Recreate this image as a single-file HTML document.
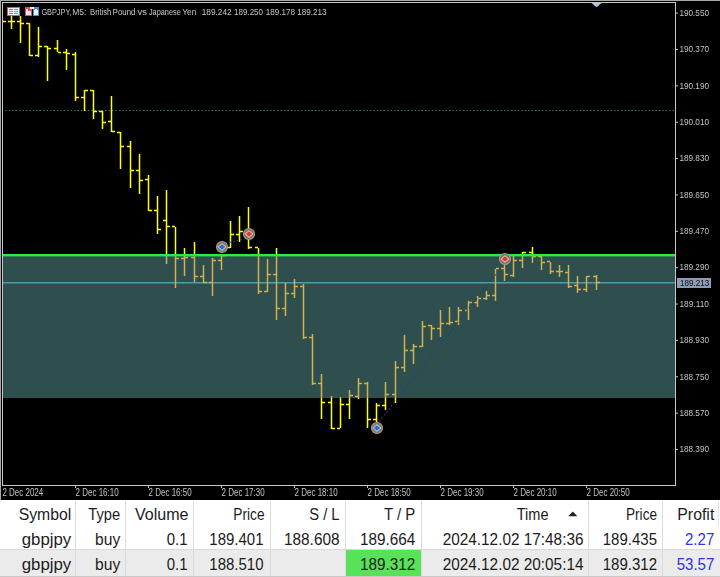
<!DOCTYPE html>
<html><head><meta charset="utf-8"><style>
html,body{margin:0;padding:0;background:#fff;width:720px;height:577px;overflow:hidden}
svg{position:absolute;left:0;top:0;display:block}
.ch{will-change:transform}
text{font-family:"Liberation Sans",sans-serif;white-space:pre}
.ax{font-size:8.4px;fill:#c4c4c4}
.tx{font-size:10px;fill:#c4c4c4}
.tt{font-size:8.4px;fill:#c8c8c8}
.tb{font-size:15.6px}
</style></head><body>
<svg width="720" height="577" viewBox="0 0 720 577" shape-rendering="crispEdges">
<rect x="0" y="500" width="720" height="77" fill="#ffffff"/><rect x="0" y="550" width="720" height="26" fill="#ebebeb"/><rect x="345" y="550" width="76" height="26" fill="#58e258"/><rect x="0" y="549" width="720" height="1" fill="#d9d9d9"/><rect x="0" y="576" width="720" height="1" fill="#c8c8c8"/><rect x="75" y="501" width="1" height="75" fill="#dcdcdc"/><rect x="125" y="501" width="1" height="75" fill="#dcdcdc"/><rect x="193" y="501" width="1" height="75" fill="#dcdcdc"/><rect x="270" y="501" width="1" height="75" fill="#dcdcdc"/><rect x="345" y="501" width="1" height="75" fill="#dcdcdc"/><rect x="421" y="501" width="1" height="75" fill="#dcdcdc"/><rect x="588" y="501" width="1" height="75" fill="#dcdcdc"/><rect x="662" y="501" width="1" height="75" fill="#dcdcdc"/><rect x="718" y="501" width="1" height="25" fill="#e4e4e4"/><text x="18.70" y="520" textLength="52.60" lengthAdjust="spacingAndGlyphs" class="tb" style="fill:#1c1c1c">Symbol</text><text x="88.30" y="520" textLength="31.90" lengthAdjust="spacingAndGlyphs" class="tb" style="fill:#1c1c1c">Type</text><text x="135.00" y="520" textLength="53.50" lengthAdjust="spacingAndGlyphs" class="tb" style="fill:#1c1c1c">Volume</text><text x="233.30" y="520" textLength="31.20" lengthAdjust="spacingAndGlyphs" class="tb" style="fill:#1c1c1c">Price</text><text x="309.30" y="520" textLength="30.20" lengthAdjust="spacingAndGlyphs" class="tb" style="fill:#1c1c1c">S / L</text><text x="384.00" y="520" textLength="31.30" lengthAdjust="spacingAndGlyphs" class="tb" style="fill:#1c1c1c">T / P</text><text x="516.70" y="520" textLength="31.80" lengthAdjust="spacingAndGlyphs" class="tb" style="fill:#1c1c1c">Time</text><text x="626.00" y="520" textLength="31.00" lengthAdjust="spacingAndGlyphs" class="tb" style="fill:#1c1c1c">Price</text><text x="677.30" y="520" textLength="37.00" lengthAdjust="spacingAndGlyphs" class="tb" style="fill:#1c1c1c">Profit</text><text x="21.70" y="544.5" textLength="49.60" lengthAdjust="spacingAndGlyphs" class="tb" style="fill:#1c1c1c">gbpjpy</text><text x="95.00" y="544.5" textLength="25.20" lengthAdjust="spacingAndGlyphs" class="tb" style="fill:#1c1c1c">buy</text><text x="166.70" y="544.5" textLength="20.80" lengthAdjust="spacingAndGlyphs" class="tb" style="fill:#1c1c1c">0.1</text><text x="209.30" y="544.5" textLength="54.20" lengthAdjust="spacingAndGlyphs" class="tb" style="fill:#1c1c1c">189.401</text><text x="284.00" y="544.5" textLength="55.50" lengthAdjust="spacingAndGlyphs" class="tb" style="fill:#1c1c1c">188.608</text><text x="360.00" y="544.5" textLength="55.30" lengthAdjust="spacingAndGlyphs" class="tb" style="fill:#1c1c1c">189.664</text><text x="442.70" y="544.5" textLength="140.80" lengthAdjust="spacingAndGlyphs" class="tb" style="fill:#1c1c1c">2024.12.02 17:48:36</text><text x="602.70" y="544.5" textLength="54.30" lengthAdjust="spacingAndGlyphs" class="tb" style="fill:#1c1c1c">189.435</text><text x="685.00" y="544.5" textLength="29.30" lengthAdjust="spacingAndGlyphs" class="tb" style="fill:#3232e6">2.27</text><text x="21.70" y="569.5" textLength="49.60" lengthAdjust="spacingAndGlyphs" class="tb" style="fill:#1c1c1c">gbpjpy</text><text x="95.00" y="569.5" textLength="25.20" lengthAdjust="spacingAndGlyphs" class="tb" style="fill:#1c1c1c">buy</text><text x="166.70" y="569.5" textLength="20.80" lengthAdjust="spacingAndGlyphs" class="tb" style="fill:#1c1c1c">0.1</text><text x="209.30" y="569.5" textLength="54.20" lengthAdjust="spacingAndGlyphs" class="tb" style="fill:#1c1c1c">188.510</text><text x="360.00" y="569.5" textLength="55.30" lengthAdjust="spacingAndGlyphs" class="tb" style="fill:#1c1c1c">189.312</text><text x="442.70" y="569.5" textLength="140.80" lengthAdjust="spacingAndGlyphs" class="tb" style="fill:#1c1c1c">2024.12.02 20:05:14</text><text x="602.70" y="569.5" textLength="54.30" lengthAdjust="spacingAndGlyphs" class="tb" style="fill:#1c1c1c">189.312</text><text x="676.70" y="569.5" textLength="37.60" lengthAdjust="spacingAndGlyphs" class="tb" style="fill:#3232e6">53.57</text><path d="M568.2 516.2 L577.4 516.2 L572.8 511.6 Z" fill="#202020" shape-rendering="auto"/>
</svg>
<svg class="ch" width="720" height="500" viewBox="0 0 720 500" shape-rendering="crispEdges">
<rect x="0" y="0" width="720" height="500" fill="#000"/>
<rect x="0" y="0" width="720" height="1" fill="#a8a8a8"/>
<rect x="0" y="0" width="1" height="500" fill="#a8a8a8"/>
<rect x="3" y="256" width="672" height="142" fill="#2f4f4f"/>
<g shape-rendering="auto"><line x1="3" y1="110.5" x2="675" y2="110.5" stroke="#2e8b57" stroke-width="1" stroke-dasharray="1.4 2.04" stroke-dashoffset="1.12"/></g>
<rect x="3" y="282" width="672" height="1.5" fill="#4a9eae" shape-rendering="auto"/>
<g shape-rendering="auto"><rect x="3" y="20.75" width="3" height="1.5" fill="#ffff00"/><rect x="10.75" y="16" width="1.5" height="13" fill="#ffff00"/><rect x="8" y="20.75" width="3" height="1.5" fill="#ffff00"/><rect x="12" y="20.75" width="3" height="1.5" fill="#ffff00"/><rect x="19.75" y="16" width="1.5" height="27" fill="#ffff00"/><rect x="17" y="20.75" width="3" height="1.5" fill="#ffff00"/><rect x="21" y="22.75" width="3" height="1.5" fill="#ffff00"/><rect x="28.75" y="23" width="1.5" height="33" fill="#ffff00"/><rect x="26" y="22.75" width="3" height="1.5" fill="#ffff00"/><rect x="30" y="54.75" width="3" height="1.5" fill="#ffff00"/><rect x="37.75" y="27" width="1.5" height="30" fill="#ffff00"/><rect x="35" y="54.75" width="3" height="1.5" fill="#ffff00"/><rect x="39" y="45.75" width="3" height="1.5" fill="#ffff00"/><rect x="46.75" y="46" width="1.5" height="35" fill="#ffff00"/><rect x="44" y="45.75" width="3" height="1.5" fill="#ffff00"/><rect x="48" y="47.75" width="3" height="1.5" fill="#ffff00"/><rect x="56.75" y="40" width="1.5" height="12" fill="#ffff00"/><rect x="54" y="47.75" width="3" height="1.5" fill="#ffff00"/><rect x="58" y="51.75" width="3" height="1.5" fill="#ffff00"/><rect x="65.75" y="49" width="1.5" height="21" fill="#ffff00"/><rect x="63" y="51.75" width="3" height="1.5" fill="#ffff00"/><rect x="67" y="52.75" width="3" height="1.5" fill="#ffff00"/><rect x="74.75" y="52" width="1.5" height="49" fill="#ffff00"/><rect x="72" y="53.75" width="3" height="1.5" fill="#ffff00"/><rect x="76" y="96.75" width="3" height="1.5" fill="#ffff00"/><rect x="83.75" y="90" width="1.5" height="21" fill="#ffff00"/><rect x="81" y="96.75" width="3" height="1.5" fill="#ffff00"/><rect x="85" y="89.75" width="3" height="1.5" fill="#ffff00"/><rect x="92.75" y="90" width="1.5" height="29" fill="#ffff00"/><rect x="90" y="89.75" width="3" height="1.5" fill="#ffff00"/><rect x="94" y="110.75" width="3" height="1.5" fill="#ffff00"/><rect x="101.75" y="111" width="1.5" height="18" fill="#ffff00"/><rect x="99" y="110.75" width="3" height="1.5" fill="#ffff00"/><rect x="103" y="121.75" width="3" height="1.5" fill="#ffff00"/><rect x="110.75" y="96" width="1.5" height="36" fill="#ffff00"/><rect x="108" y="120.75" width="3" height="1.5" fill="#ffff00"/><rect x="112" y="130.75" width="3" height="1.5" fill="#ffff00"/><rect x="119.75" y="132" width="1.5" height="37" fill="#ffff00"/><rect x="117" y="131.75" width="3" height="1.5" fill="#ffff00"/><rect x="121" y="145.75" width="3" height="1.5" fill="#ffff00"/><rect x="129.75" y="141" width="1.5" height="47" fill="#ffff00"/><rect x="127" y="145.75" width="3" height="1.5" fill="#ffff00"/><rect x="131" y="169.75" width="3" height="1.5" fill="#ffff00"/><rect x="138.75" y="154" width="1.5" height="40" fill="#ffff00"/><rect x="136" y="169.75" width="3" height="1.5" fill="#ffff00"/><rect x="140" y="179.75" width="3" height="1.5" fill="#ffff00"/><rect x="147.75" y="175" width="1.5" height="36" fill="#ffff00"/><rect x="145" y="178.75" width="3" height="1.5" fill="#ffff00"/><rect x="149" y="209.75" width="3" height="1.5" fill="#ffff00"/><rect x="156.75" y="196" width="1.5" height="38" fill="#ffff00"/><rect x="154" y="209.75" width="3" height="1.5" fill="#ffff00"/><rect x="158" y="228.75" width="3" height="1.5" fill="#ffff00"/><rect x="165.75" y="190" width="1.5" height="66" fill="#ffff00"/><rect x="165.75" y="256" width="1.5" height="8" fill="#d0b04f"/><rect x="163" y="219.75" width="3" height="1.5" fill="#ffff00"/><rect x="167" y="225.75" width="3" height="1.5" fill="#ffff00"/><rect x="174.75" y="227" width="1.5" height="29" fill="#ffff00"/><rect x="174.75" y="256" width="1.5" height="32" fill="#d0b04f"/><rect x="172" y="225.75" width="3" height="1.5" fill="#ffff00"/><rect x="176" y="257.75" width="3" height="1.5" fill="#d0b04f"/><rect x="183.75" y="248" width="1.5" height="8" fill="#ffff00"/><rect x="183.75" y="256" width="1.5" height="20" fill="#d0b04f"/><rect x="181" y="257.75" width="3" height="1.5" fill="#d0b04f"/><rect x="185" y="256.75" width="3" height="1.5" fill="#d0b04f"/><rect x="193.75" y="242" width="1.5" height="14" fill="#ffff00"/><rect x="193.75" y="256" width="1.5" height="26" fill="#d0b04f"/><rect x="191" y="256.75" width="3" height="1.5" fill="#d0b04f"/><rect x="195" y="275.75" width="3" height="1.5" fill="#d0b04f"/><rect x="202.75" y="265" width="1.5" height="18" fill="#d0b04f"/><rect x="200" y="275.75" width="3" height="1.5" fill="#d0b04f"/><rect x="204" y="281.75" width="3" height="1.5" fill="#d0b04f"/><rect x="211.75" y="258" width="1.5" height="38" fill="#d0b04f"/><rect x="209" y="281.75" width="3" height="1.5" fill="#d0b04f"/><rect x="213" y="259.75" width="3" height="1.5" fill="#d0b04f"/><rect x="220.75" y="255" width="1.5" height="1" fill="#ffff00"/><rect x="220.75" y="256" width="1.5" height="14" fill="#d0b04f"/><rect x="218" y="259.75" width="3" height="1.5" fill="#d0b04f"/><rect x="222" y="254.75" width="3" height="1.5" fill="#ffff00"/><rect x="229.75" y="221" width="1.5" height="27" fill="#ffff00"/><rect x="227" y="246.75" width="3" height="1.5" fill="#ffff00"/><rect x="231" y="233.75" width="3" height="1.5" fill="#ffff00"/><rect x="238.75" y="216" width="1.5" height="26" fill="#ffff00"/><rect x="236" y="233.75" width="3" height="1.5" fill="#ffff00"/><rect x="240" y="230.75" width="3" height="1.5" fill="#ffff00"/><rect x="247.75" y="207" width="1.5" height="42" fill="#ffff00"/><rect x="245" y="233.75" width="3" height="1.5" fill="#ffff00"/><rect x="249" y="246.75" width="3" height="1.5" fill="#ffff00"/><rect x="257.75" y="248" width="1.5" height="8" fill="#ffff00"/><rect x="257.75" y="256" width="1.5" height="38" fill="#d0b04f"/><rect x="255" y="246.75" width="3" height="1.5" fill="#ffff00"/><rect x="259" y="290.75" width="3" height="1.5" fill="#d0b04f"/><rect x="266.75" y="259" width="1.5" height="33" fill="#d0b04f"/><rect x="264" y="290.75" width="3" height="1.5" fill="#d0b04f"/><rect x="268" y="273.75" width="3" height="1.5" fill="#d0b04f"/><rect x="275.75" y="248" width="1.5" height="8" fill="#ffff00"/><rect x="275.75" y="256" width="1.5" height="64" fill="#d0b04f"/><rect x="273" y="273.75" width="3" height="1.5" fill="#d0b04f"/><rect x="277" y="307.75" width="3" height="1.5" fill="#d0b04f"/><rect x="284.75" y="283" width="1.5" height="33" fill="#d0b04f"/><rect x="282" y="307.75" width="3" height="1.5" fill="#d0b04f"/><rect x="286" y="292.75" width="3" height="1.5" fill="#d0b04f"/><rect x="293.75" y="279" width="1.5" height="19" fill="#d0b04f"/><rect x="291" y="292.75" width="3" height="1.5" fill="#d0b04f"/><rect x="295" y="285.75" width="3" height="1.5" fill="#d0b04f"/><rect x="302.75" y="284" width="1.5" height="55" fill="#d0b04f"/><rect x="300" y="285.75" width="3" height="1.5" fill="#d0b04f"/><rect x="304" y="336.75" width="3" height="1.5" fill="#d0b04f"/><rect x="311.75" y="334" width="1.5" height="51" fill="#d0b04f"/><rect x="309" y="336.75" width="3" height="1.5" fill="#d0b04f"/><rect x="313" y="382.75" width="3" height="1.5" fill="#d0b04f"/><rect x="320.75" y="374" width="1.5" height="24" fill="#d0b04f"/><rect x="320.75" y="398" width="1.5" height="21" fill="#ffff00"/><rect x="318" y="382.75" width="3" height="1.5" fill="#d0b04f"/><rect x="322" y="401.75" width="3" height="1.5" fill="#ffff00"/><rect x="330.75" y="396" width="1.5" height="2" fill="#d0b04f"/><rect x="330.75" y="398" width="1.5" height="31" fill="#ffff00"/><rect x="328" y="401.75" width="3" height="1.5" fill="#ffff00"/><rect x="332" y="427.75" width="3" height="1.5" fill="#ffff00"/><rect x="339.75" y="397" width="1.5" height="1" fill="#d0b04f"/><rect x="339.75" y="398" width="1.5" height="30" fill="#ffff00"/><rect x="337" y="427.75" width="3" height="1.5" fill="#ffff00"/><rect x="341" y="403.75" width="3" height="1.5" fill="#ffff00"/><rect x="348.75" y="390" width="1.5" height="8" fill="#d0b04f"/><rect x="348.75" y="398" width="1.5" height="21" fill="#ffff00"/><rect x="346" y="403.75" width="3" height="1.5" fill="#ffff00"/><rect x="350" y="394.75" width="3" height="1.5" fill="#d0b04f"/><rect x="357.75" y="378" width="1.5" height="20" fill="#d0b04f"/><rect x="357.75" y="398" width="1.5" height="1" fill="#ffff00"/><rect x="355" y="395.75" width="3" height="1.5" fill="#d0b04f"/><rect x="359" y="382.75" width="3" height="1.5" fill="#d0b04f"/><rect x="366.75" y="382" width="1.5" height="16" fill="#d0b04f"/><rect x="366.75" y="398" width="1.5" height="30" fill="#ffff00"/><rect x="364" y="382.75" width="3" height="1.5" fill="#d0b04f"/><rect x="368" y="418.75" width="3" height="1.5" fill="#ffff00"/><rect x="375.75" y="403" width="1.5" height="19" fill="#ffff00"/><rect x="373" y="418.75" width="3" height="1.5" fill="#ffff00"/><rect x="377" y="404.75" width="3" height="1.5" fill="#ffff00"/><rect x="384.75" y="382" width="1.5" height="16" fill="#d0b04f"/><rect x="384.75" y="398" width="1.5" height="12" fill="#ffff00"/><rect x="382" y="404.75" width="3" height="1.5" fill="#ffff00"/><rect x="386" y="393.75" width="3" height="1.5" fill="#d0b04f"/><rect x="394.75" y="361" width="1.5" height="37" fill="#d0b04f"/><rect x="394.75" y="398" width="1.5" height="5" fill="#ffff00"/><rect x="392" y="393.75" width="3" height="1.5" fill="#d0b04f"/><rect x="396" y="366.75" width="3" height="1.5" fill="#d0b04f"/><rect x="403.75" y="335" width="1.5" height="37" fill="#d0b04f"/><rect x="401" y="366.75" width="3" height="1.5" fill="#d0b04f"/><rect x="405" y="349.75" width="3" height="1.5" fill="#d0b04f"/><rect x="412.75" y="344" width="1.5" height="20" fill="#d0b04f"/><rect x="410" y="349.75" width="3" height="1.5" fill="#d0b04f"/><rect x="414" y="345.75" width="3" height="1.5" fill="#d0b04f"/><rect x="421.75" y="321" width="1.5" height="26" fill="#d0b04f"/><rect x="419" y="345.75" width="3" height="1.5" fill="#d0b04f"/><rect x="423" y="325.75" width="3" height="1.5" fill="#d0b04f"/><rect x="430.75" y="325" width="1.5" height="15" fill="#d0b04f"/><rect x="428" y="324.75" width="3" height="1.5" fill="#d0b04f"/><rect x="432" y="327.75" width="3" height="1.5" fill="#d0b04f"/><rect x="439.75" y="310" width="1.5" height="27" fill="#d0b04f"/><rect x="437" y="327.75" width="3" height="1.5" fill="#d0b04f"/><rect x="441" y="322.75" width="3" height="1.5" fill="#d0b04f"/><rect x="448.75" y="307" width="1.5" height="18" fill="#d0b04f"/><rect x="446" y="322.75" width="3" height="1.5" fill="#d0b04f"/><rect x="450" y="321.75" width="3" height="1.5" fill="#d0b04f"/><rect x="457.75" y="307" width="1.5" height="18" fill="#d0b04f"/><rect x="455" y="320.75" width="3" height="1.5" fill="#d0b04f"/><rect x="459" y="309.75" width="3" height="1.5" fill="#d0b04f"/><rect x="467.75" y="301" width="1.5" height="19" fill="#d0b04f"/><rect x="465" y="309.75" width="3" height="1.5" fill="#d0b04f"/><rect x="469" y="301.75" width="3" height="1.5" fill="#d0b04f"/><rect x="476.75" y="296" width="1.5" height="11" fill="#d0b04f"/><rect x="474" y="301.75" width="3" height="1.5" fill="#d0b04f"/><rect x="478" y="297.75" width="3" height="1.5" fill="#d0b04f"/><rect x="485.75" y="291" width="1.5" height="9" fill="#d0b04f"/><rect x="483" y="297.75" width="3" height="1.5" fill="#d0b04f"/><rect x="487" y="294.75" width="3" height="1.5" fill="#d0b04f"/><rect x="494.75" y="269" width="1.5" height="32" fill="#d0b04f"/><rect x="492" y="294.75" width="3" height="1.5" fill="#d0b04f"/><rect x="496" y="267.75" width="3" height="1.5" fill="#d0b04f"/><rect x="503.75" y="262" width="1.5" height="19" fill="#d0b04f"/><rect x="501" y="267.75" width="3" height="1.5" fill="#d0b04f"/><rect x="505" y="273.75" width="3" height="1.5" fill="#d0b04f"/><rect x="512.75" y="256" width="1.5" height="21" fill="#d0b04f"/><rect x="510" y="274.75" width="3" height="1.5" fill="#d0b04f"/><rect x="514" y="259.75" width="3" height="1.5" fill="#d0b04f"/><rect x="521.75" y="252" width="1.5" height="4" fill="#ffff00"/><rect x="521.75" y="256" width="1.5" height="12" fill="#d0b04f"/><rect x="519" y="259.75" width="3" height="1.5" fill="#d0b04f"/><rect x="523" y="251.75" width="3" height="1.5" fill="#ffff00"/><rect x="531.75" y="247" width="1.5" height="9" fill="#ffff00"/><rect x="531.75" y="256" width="1.5" height="7" fill="#d0b04f"/><rect x="529" y="251.75" width="3" height="1.5" fill="#ffff00"/><rect x="533" y="255.75" width="3" height="1.5" fill="#d0b04f"/><rect x="540.75" y="256" width="1.5" height="14" fill="#d0b04f"/><rect x="538" y="255.75" width="3" height="1.5" fill="#d0b04f"/><rect x="542" y="261.75" width="3" height="1.5" fill="#d0b04f"/><rect x="549.75" y="262" width="1.5" height="12" fill="#d0b04f"/><rect x="547" y="260.75" width="3" height="1.5" fill="#d0b04f"/><rect x="551" y="270.75" width="3" height="1.5" fill="#d0b04f"/><rect x="558.75" y="265" width="1.5" height="12" fill="#d0b04f"/><rect x="556" y="270.75" width="3" height="1.5" fill="#d0b04f"/><rect x="560" y="270.75" width="3" height="1.5" fill="#d0b04f"/><rect x="567.75" y="265" width="1.5" height="23" fill="#d0b04f"/><rect x="565" y="271.75" width="3" height="1.5" fill="#d0b04f"/><rect x="569" y="285.75" width="3" height="1.5" fill="#d0b04f"/><rect x="576.75" y="276" width="1.5" height="17" fill="#d0b04f"/><rect x="574" y="284.75" width="3" height="1.5" fill="#d0b04f"/><rect x="578" y="288.75" width="3" height="1.5" fill="#d0b04f"/><rect x="585.75" y="276" width="1.5" height="16" fill="#d0b04f"/><rect x="583" y="288.75" width="3" height="1.5" fill="#d0b04f"/><rect x="587" y="275.75" width="3" height="1.5" fill="#d0b04f"/><rect x="595.75" y="275" width="1.5" height="15" fill="#d0b04f"/><rect x="593" y="275.75" width="3" height="1.5" fill="#d0b04f"/><rect x="597" y="281.75" width="3" height="1.5" fill="#d0b04f"/></g>
<rect x="3" y="254" width="672" height="2.4" fill="#22ee44" shape-rendering="auto"/>
<rect x="2" y="2" width="674" height="1" fill="#c8c8c8"/>
<rect x="2" y="2" width="1" height="484" fill="#c8c8c8"/>
<rect x="675" y="2" width="1" height="484" fill="#c8c8c8"/>
<rect x="2" y="485" width="674" height="1" fill="#c8c8c8"/>
<rect x="676" y="12.60" width="2" height="1" fill="#c4c4c4" shape-rendering="auto"/><text x="679.40" y="15.9" textLength="29.60" lengthAdjust="spacingAndGlyphs" class="ax" >190.550</text><rect x="676" y="48.97" width="2" height="1" fill="#c4c4c4" shape-rendering="auto"/><text x="679.40" y="52.27" textLength="29.60" lengthAdjust="spacingAndGlyphs" class="ax" >190.370</text><rect x="676" y="85.34" width="2" height="1" fill="#c4c4c4" shape-rendering="auto"/><text x="679.40" y="88.64" textLength="29.60" lengthAdjust="spacingAndGlyphs" class="ax" >190.190</text><rect x="676" y="121.71" width="2" height="1" fill="#c4c4c4" shape-rendering="auto"/><text x="679.40" y="125.01" textLength="29.60" lengthAdjust="spacingAndGlyphs" class="ax" >190.010</text><rect x="676" y="158.08" width="2" height="1" fill="#c4c4c4" shape-rendering="auto"/><text x="679.40" y="161.38" textLength="29.60" lengthAdjust="spacingAndGlyphs" class="ax" >189.830</text><rect x="676" y="194.45" width="2" height="1" fill="#c4c4c4" shape-rendering="auto"/><text x="679.40" y="197.75" textLength="29.60" lengthAdjust="spacingAndGlyphs" class="ax" >189.650</text><rect x="676" y="230.82" width="2" height="1" fill="#c4c4c4" shape-rendering="auto"/><text x="679.40" y="234.12" textLength="29.60" lengthAdjust="spacingAndGlyphs" class="ax" >189.470</text><rect x="676" y="267.19" width="2" height="1" fill="#c4c4c4" shape-rendering="auto"/><text x="679.40" y="270.49" textLength="29.60" lengthAdjust="spacingAndGlyphs" class="ax" >189.290</text><rect x="676" y="303.56" width="2" height="1" fill="#c4c4c4" shape-rendering="auto"/><text x="679.40" y="306.86" textLength="29.60" lengthAdjust="spacingAndGlyphs" class="ax" >189.110</text><rect x="676" y="339.93" width="2" height="1" fill="#c4c4c4" shape-rendering="auto"/><text x="679.40" y="343.23" textLength="29.60" lengthAdjust="spacingAndGlyphs" class="ax" >188.930</text><rect x="676" y="376.30" width="2" height="1" fill="#c4c4c4" shape-rendering="auto"/><text x="679.40" y="379.6" textLength="29.60" lengthAdjust="spacingAndGlyphs" class="ax" >188.750</text><rect x="676" y="412.67" width="2" height="1" fill="#c4c4c4" shape-rendering="auto"/><text x="679.40" y="415.97" textLength="29.60" lengthAdjust="spacingAndGlyphs" class="ax" >188.570</text><rect x="676" y="449.04" width="2" height="1" fill="#c4c4c4" shape-rendering="auto"/><text x="679.40" y="452.34" textLength="29.60" lengthAdjust="spacingAndGlyphs" class="ax" >188.390</text>
<rect x="677" y="278" width="34" height="10" fill="#8c9cb4"/>
<text x="680.00" y="285.7" textLength="29.20" lengthAdjust="spacingAndGlyphs" class="ax" style="fill:#101010">189.213</text>
<text x="2.40" y="495.6" textLength="40.80" lengthAdjust="spacingAndGlyphs" class="tx" >2 Dec 2024</text><rect x="75" y="486" width="1" height="2" fill="#c4c4c4"/><text x="75.60" y="495.6" textLength="43.00" lengthAdjust="spacingAndGlyphs" class="tx" >2 Dec 16:10</text><rect x="148" y="486" width="1" height="2" fill="#c4c4c4"/><text x="148.60" y="495.6" textLength="43.00" lengthAdjust="spacingAndGlyphs" class="tx" >2 Dec 16:50</text><rect x="221" y="486" width="1" height="2" fill="#c4c4c4"/><text x="221.60" y="495.6" textLength="43.00" lengthAdjust="spacingAndGlyphs" class="tx" >2 Dec 17:30</text><rect x="294" y="486" width="1" height="2" fill="#c4c4c4"/><text x="294.60" y="495.6" textLength="43.00" lengthAdjust="spacingAndGlyphs" class="tx" >2 Dec 18:10</text><rect x="367" y="486" width="1" height="2" fill="#c4c4c4"/><text x="367.60" y="495.6" textLength="43.00" lengthAdjust="spacingAndGlyphs" class="tx" >2 Dec 18:50</text><rect x="440" y="486" width="1" height="2" fill="#c4c4c4"/><text x="440.60" y="495.6" textLength="43.00" lengthAdjust="spacingAndGlyphs" class="tx" >2 Dec 19:30</text><rect x="513" y="486" width="1" height="2" fill="#c4c4c4"/><text x="513.60" y="495.6" textLength="43.00" lengthAdjust="spacingAndGlyphs" class="tx" >2 Dec 20:10</text><rect x="586" y="486" width="1" height="2" fill="#c4c4c4"/><text x="586.60" y="495.6" textLength="43.00" lengthAdjust="spacingAndGlyphs" class="tx" >2 Dec 20:50</text>
<path d="M591.5 3 L601.5 3 L596.5 7.3 Z" fill="#b0c4de" shape-rendering="auto"/>
<g shape-rendering="auto">
<line x1="222" y1="244.3" x2="248" y2="238" stroke="#1a50a8" stroke-width="1.1" stroke-dasharray="1.5 2.3"/>
<line x1="377" y1="424.5" x2="505" y2="262.8" stroke="#1a4088" stroke-width="1.1" stroke-dasharray="1.5 2.3"/>
<circle cx="222" cy="247" r="5.5" fill="#857565" stroke="#a89888" stroke-width="1.2"/><path d="M218.2 247 L222 243.7 L225.8 247 L222 250.3 Z" fill="#1e70d8" stroke="#dde8f0" stroke-width="0.9"/>
<circle cx="249" cy="234" r="5.5" fill="#857565" stroke="#a89888" stroke-width="1.2"/><path d="M245.2 234 L249 230.7 L252.8 234 L249 237.3 Z" fill="#e83820" stroke="#dde8f0" stroke-width="0.9"/>
<circle cx="377" cy="428" r="5.5" fill="#857565" stroke="#a89888" stroke-width="1.2"/><path d="M373.2 428 L377 424.7 L380.8 428 L377 431.3 Z" fill="#1e70d8" stroke="#dde8f0" stroke-width="0.9"/>
<circle cx="505" cy="259" r="5.5" fill="#857565" stroke="#a89888" stroke-width="1.2"/><path d="M501.2 259 L505 255.7 L508.8 259 L505 262.3 Z" fill="#e83820" stroke="#dde8f0" stroke-width="0.9"/>
</g>
<g>
<rect x="7" y="7" width="7" height="9" fill="#e05050"/>
<rect x="13" y="7" width="7" height="9" fill="#4a90e0"/>
<rect x="8" y="8" width="11" height="7" fill="#f4f4f4"/>
<rect x="9" y="9" width="4" height="1" fill="#e06060"/>
<rect x="9" y="11" width="4" height="1" fill="#e07070"/>
<rect x="9" y="13" width="4" height="1" fill="#e06060"/>
<rect x="14" y="9" width="4" height="1" fill="#5a9ae0"/>
<rect x="14" y="11" width="4" height="1" fill="#6aa4e0"/>
<rect x="14" y="13" width="4" height="1" fill="#5a9ae0"/>
<rect x="25" y="7" width="7" height="9" fill="#e05050"/>
<rect x="33" y="7" width="6" height="9" fill="#4a90e0"/>
<rect x="26" y="9" width="2" height="6" fill="#f8e8e8"/>
<rect x="28" y="11" width="3" height="4" fill="#f8e8e8"/>
<rect x="30" y="7" width="4" height="2" fill="#f0f0f0"/>
<rect x="34" y="10" width="4" height="5" fill="#e8f0ff"/>
<rect x="35" y="9" width="2" height="1" fill="#e8f0ff"/>
</g>
<text x="41.40" y="15" textLength="30.00" lengthAdjust="spacingAndGlyphs" class="tt" >GBPJPY,</text><text x="72.30" y="15" textLength="14.10" lengthAdjust="spacingAndGlyphs" class="tt" >M5:</text><text x="90.10" y="15" textLength="21.20" lengthAdjust="spacingAndGlyphs" class="tt" >British</text><text x="112.60" y="15" textLength="22.90" lengthAdjust="spacingAndGlyphs" class="tt" >Pound</text><text x="137.50" y="15" textLength="9.60" lengthAdjust="spacingAndGlyphs" class="tt" >vs</text><text x="148.90" y="15" textLength="31.90" lengthAdjust="spacingAndGlyphs" class="tt" >Japanese</text><text x="182.20" y="15" textLength="14.10" lengthAdjust="spacingAndGlyphs" class="tt" >Yen</text><text x="201.70" y="15" textLength="30.00" lengthAdjust="spacingAndGlyphs" class="tt" >189.242</text><text x="234.10" y="15" textLength="28.90" lengthAdjust="spacingAndGlyphs" class="tt" >189.250</text><text x="265.70" y="15" textLength="29.20" lengthAdjust="spacingAndGlyphs" class="tt" >189.178</text><text x="297.20" y="15" textLength="29.30" lengthAdjust="spacingAndGlyphs" class="tt" >189.213</text>
</svg>
</body></html>
